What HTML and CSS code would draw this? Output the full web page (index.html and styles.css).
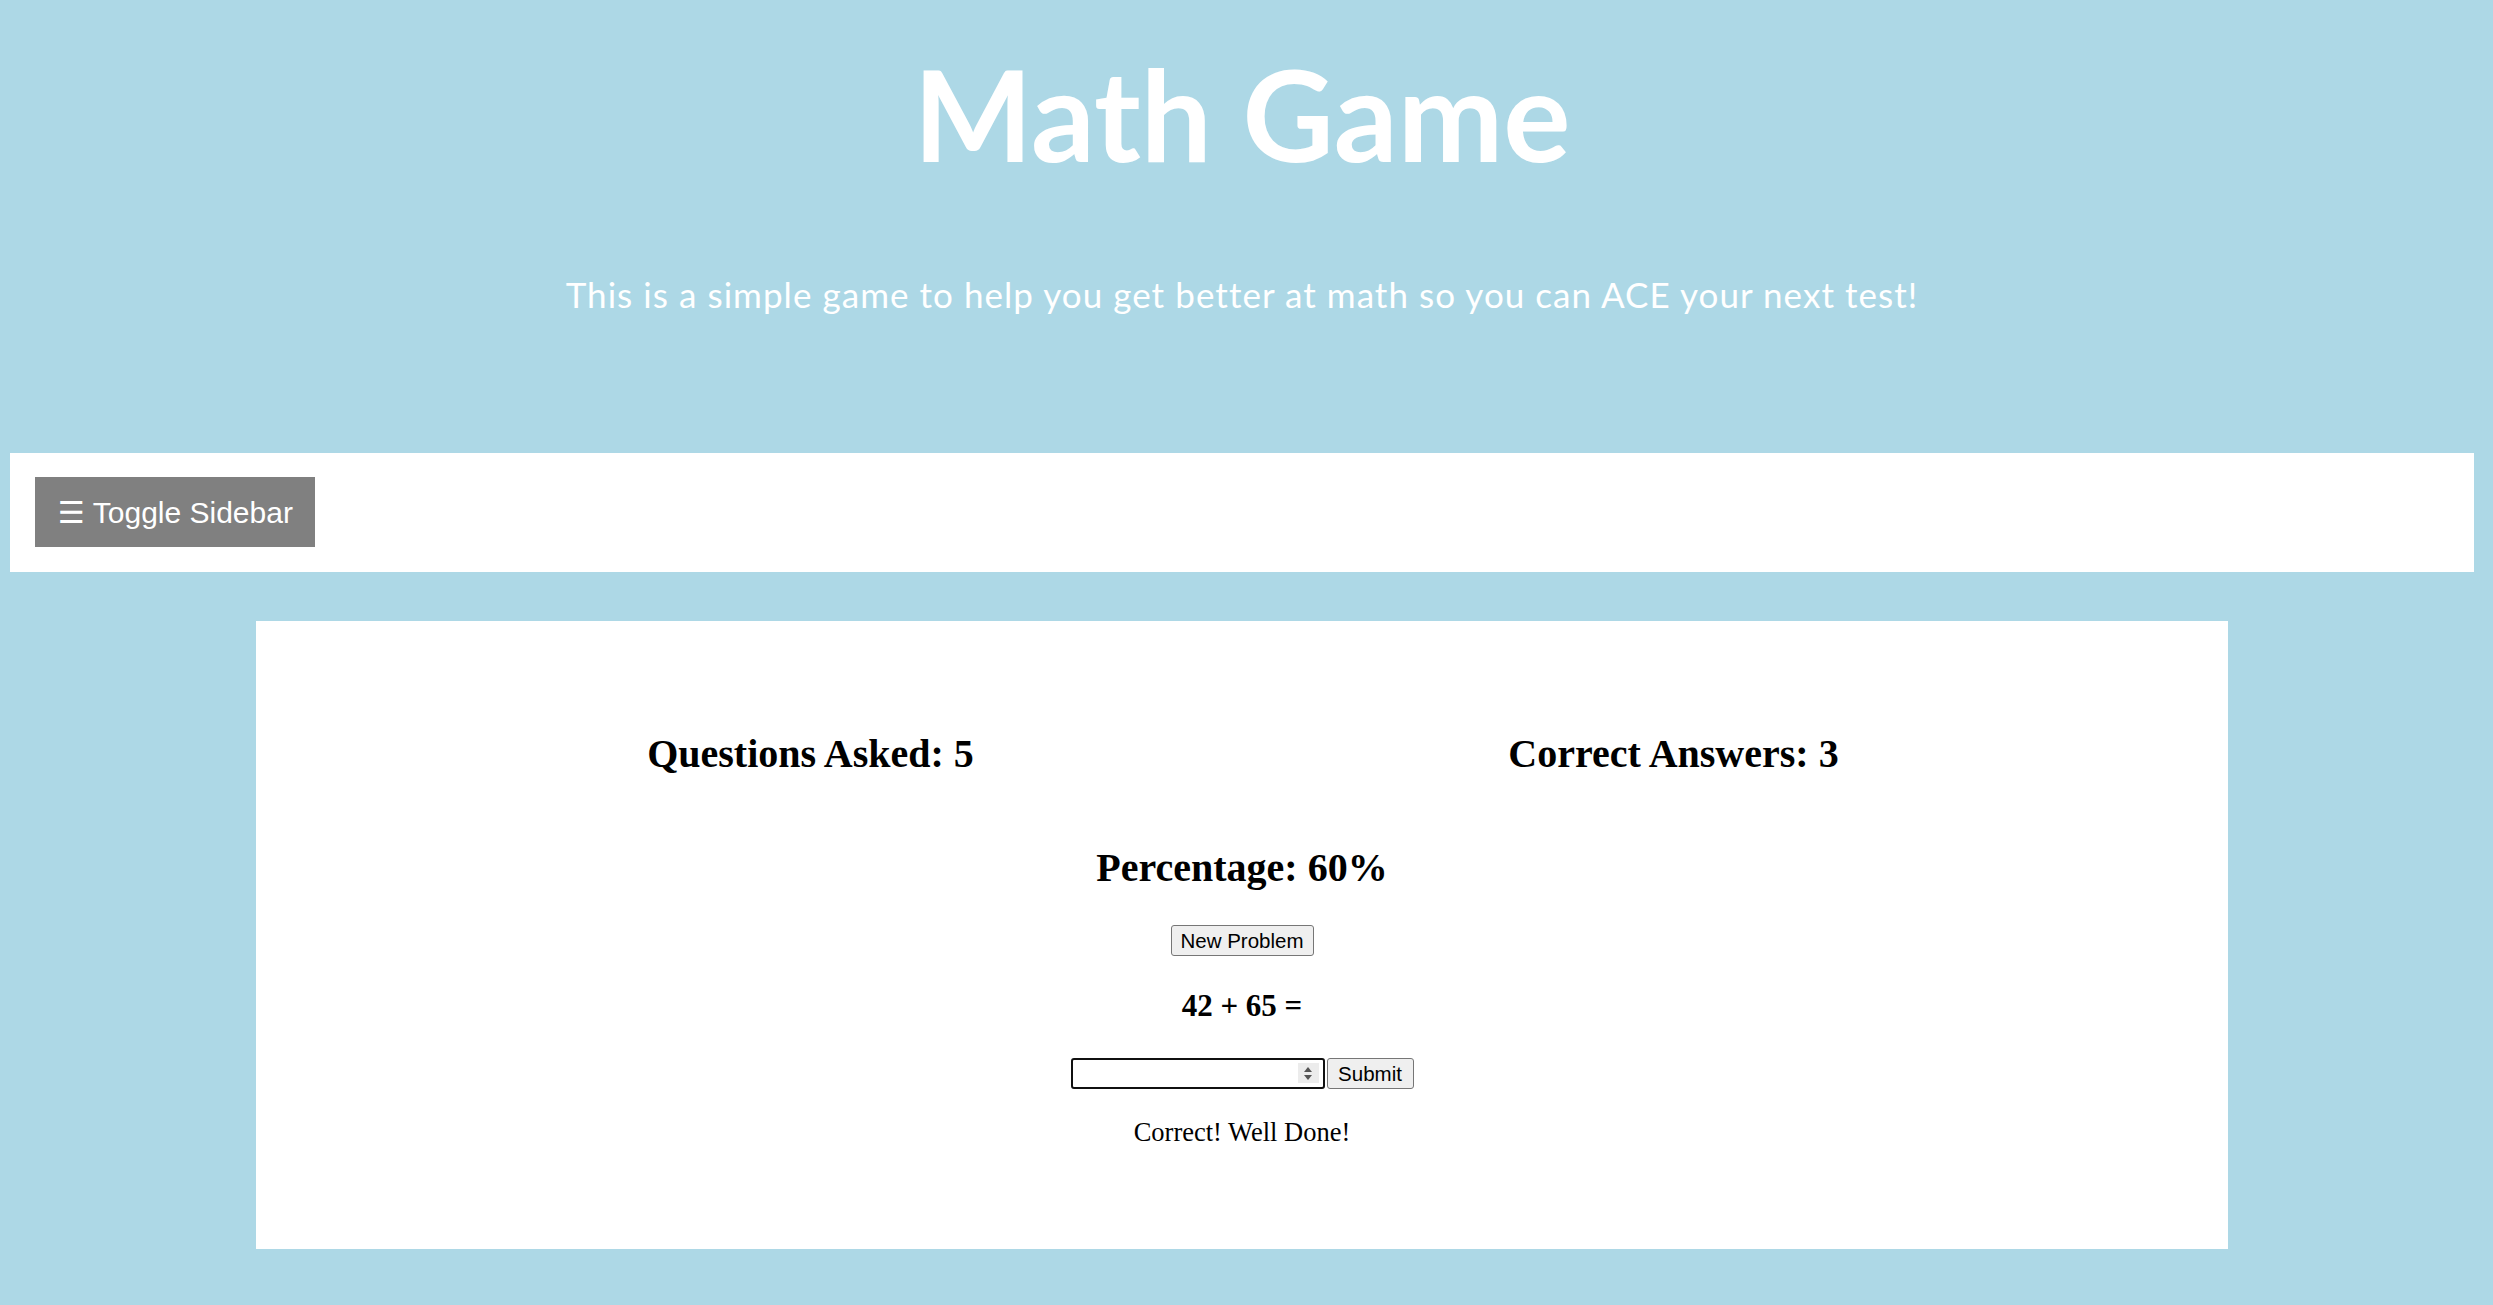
FILE: index.html
```html
<!DOCTYPE html>
<html lang="en">
<head>
<meta charset="utf-8">
<title>Math Game</title>
<link rel="stylesheet" href="styles.css">
</head>
<body>
<header class="header">
  <h1 class="title">Math Game</h1>
  <p class="subtitle">This is a simple game to help you get better at math so you can ACE your next test!</p>
</header>
<nav class="navbar">
  <button class="toggle-btn">☰ Toggle Sidebar</button>
</nav>
<main class="game">
  <div class="stats">
    <h2 class="stat">Questions Asked: 5</h2>
    <h2 class="stat">Correct Answers: 3</h2>
  </div>
  <h2 class="percentage">Percentage: 60%</h2>
  <div class="row"><button class="native-btn new-btn">New Problem</button></div>
  <h3 class="problem">42 + 65 =</h3>
  <div class="answer-row">
    <span class="input-wrap">
      <input class="answer" type="number">
      <span class="spinner"><span class="tri-up"></span><span class="tri-down"></span></span>
    </span>
    <button class="native-btn submit-btn">Submit</button>
  </div>
  <p class="feedback">Correct! Well Done!</p>
</main>
</body>
</html>
```

FILE: styles.css
```css
html, body {
  margin: 0;
  padding: 0;
}
body {
  background: #add8e6;
  font-family: "Liberation Serif", "Times New Roman", serif;
  color: #000;
  height: 1305px;
  overflow: hidden;
}
.header {
  text-align: center;
  color: #fff;
  padding: 51px 9px 0 0;
}
.title {
  margin: 0;
  font-family: "Lato", "Open Sans", sans-serif;
  font-weight: 700;
  font-size: 126px;
  line-height: 126px;
}
.subtitle {
  margin: 100px 0 0;
  font-family: "Lato", "Open Sans", sans-serif;
  font-weight: 400;
  font-size: 35px;
  line-height: 35px;
  letter-spacing: 1.05px;
}
.navbar {
  margin: 141px 19px 0 10px;
  background: #fff;
  height: 119px;
  box-sizing: border-box;
  padding: 24px 25px 25px;
  display: flex;
  align-items: flex-start;
}
.toggle-btn {
  width: 280px;
  height: 70px;
  border: none;
  background: #808080;
  color: #fff;
  font-family: "Liberation Sans", Arial, "DejaVu Sans", sans-serif;
  font-size: 30px;
  padding: 0 0 0 1px;
  display: flex;
  align-items: center;
  justify-content: center;
  cursor: pointer;
}
.game {
  margin: 49px 265px 0 256px;
  background: #fff;
  height: 628px;
  box-sizing: border-box;
  padding: 110px 123px 0;
  text-align: center;
}
.stats {
  display: grid;
  grid-template-columns: 1fr 1fr;
}
.stat, .percentage {
  margin: 0;
  font-size: 40px;
  line-height: 46px;
  font-weight: 700;
}
.percentage {
  margin-top: 68px;
}
.row {
  margin-top: 34px;
  display: flex;
  justify-content: center;
}
.native-btn {
  height: 31px;
  box-sizing: border-box;
  background: #efefef;
  border: 1.5px solid #767676;
  border-radius: 3px;
  font-family: "Liberation Sans", Arial, sans-serif;
  font-size: 20.5px;
  color: #000;
  padding: 0;
  display: flex;
  align-items: center;
  justify-content: center;
}
.new-btn {
  width: 143px;
}
.problem {
  margin: 32px 0 0;
  font-size: 31px;
  line-height: 36px;
  font-weight: 700;
}
.answer-row {
  margin-top: 34px;
  display: flex;
  justify-content: center;
  gap: 2px;
}
.input-wrap {
  position: relative;
  display: block;
  width: 254px;
  height: 31px;
}
.answer {
  width: 254px;
  height: 31px;
  box-sizing: border-box;
  border: 2px solid #101010;
  border-radius: 3px;
  outline: none;
  margin: 0;
  padding: 0 8px;
  font-size: 21px;
  background: #fff;
  -moz-appearance: textfield;
}
.answer::-webkit-inner-spin-button,
.answer::-webkit-outer-spin-button {
  -webkit-appearance: none;
  margin: 0;
}
.spinner {
  position: absolute;
  right: 6px;
  top: 5px;
  width: 21px;
  height: 20px;
  background: #ececec;
  display: flex;
  flex-direction: column;
  align-items: center;
  justify-content: center;
  gap: 3px;
}
.tri-up {
  width: 0;
  height: 0;
  border-left: 4.5px solid transparent;
  border-right: 4.5px solid transparent;
  border-bottom: 5px solid #555;
}
.tri-down {
  width: 0;
  height: 0;
  border-left: 4.5px solid transparent;
  border-right: 4.5px solid transparent;
  border-top: 5px solid #555;
}
.submit-btn {
  width: 87px;
}
.feedback {
  margin: 28px 0 0;
  font-size: 26.5px;
  line-height: 31px;
}
```
